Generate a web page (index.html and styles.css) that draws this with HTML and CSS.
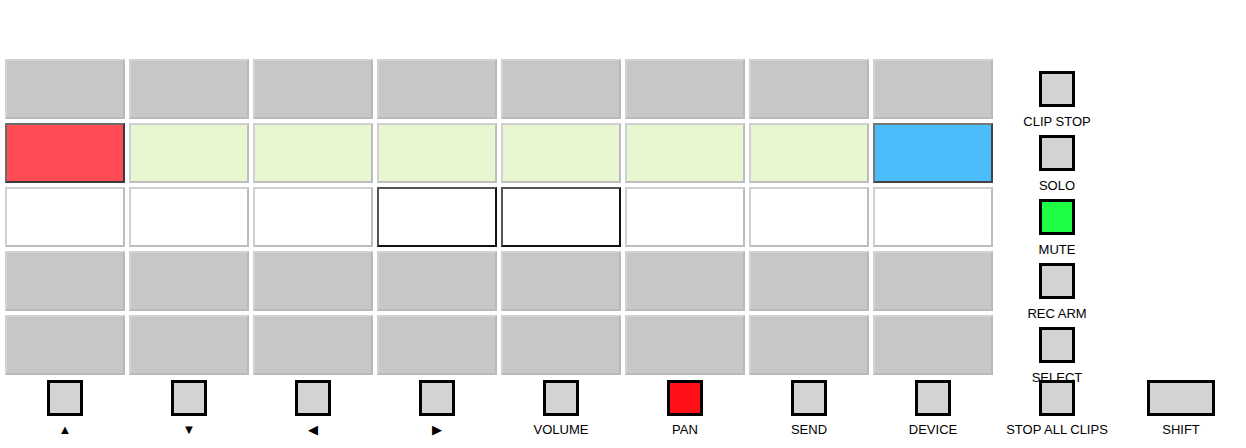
FILE: index.html
```html
<!DOCTYPE html>
<html>
<head>
<meta charset="utf-8">
<link rel="stylesheet" href="styles.css">
</head>
<body>
<div class="board">
  <div class="row">
    <div class="pad off"></div><div class="pad off"></div><div class="pad off"></div><div class="pad off"></div>
    <div class="pad off"></div><div class="pad off"></div><div class="pad off"></div><div class="pad off"></div>
    <div class="side"><div class="btn"></div><div class="label side-label">CLIP STOP</div></div>
  </div>
  <div class="row">
    <div class="pad red"></div><div class="pad lime"></div><div class="pad lime"></div><div class="pad lime"></div>
    <div class="pad lime"></div><div class="pad lime"></div><div class="pad lime"></div><div class="pad blue"></div>
    <div class="side"><div class="btn"></div><div class="label side-label">SOLO</div></div>
  </div>
  <div class="row">
    <div class="pad white"></div><div class="pad white"></div><div class="pad white"></div><div class="pad white sel"></div>
    <div class="pad white sel"></div><div class="pad white"></div><div class="pad white"></div><div class="pad white"></div>
    <div class="side"><div class="btn green"></div><div class="label side-label">MUTE</div></div>
  </div>
  <div class="row">
    <div class="pad off"></div><div class="pad off"></div><div class="pad off"></div><div class="pad off"></div>
    <div class="pad off"></div><div class="pad off"></div><div class="pad off"></div><div class="pad off"></div>
    <div class="side"><div class="btn"></div><div class="label side-label">REC ARM</div></div>
  </div>
  <div class="row">
    <div class="pad off"></div><div class="pad off"></div><div class="pad off"></div><div class="pad off"></div>
    <div class="pad off"></div><div class="pad off"></div><div class="pad off"></div><div class="pad off"></div>
    <div class="side"><div class="btn"></div><div class="label side-label">SELECT</div></div>
  </div>
  <div class="row bottom">
    <div class="cell"><div class="btn"></div><div class="label">▲</div></div>
    <div class="cell"><div class="btn"></div><div class="label">▼</div></div>
    <div class="cell"><div class="btn"></div><div class="label">◀</div></div>
    <div class="cell"><div class="btn"></div><div class="label">▶</div></div>
    <div class="cell"><div class="btn"></div><div class="label">VOLUME</div></div>
    <div class="cell"><div class="btn red-btn"></div><div class="label">PAN</div></div>
    <div class="cell"><div class="btn"></div><div class="label">SEND</div></div>
    <div class="cell"><div class="btn"></div><div class="label">DEVICE</div></div>
    <div class="cell"><div class="btn"></div><div class="label">STOP ALL CLIPS</div></div>
    <div class="cell"><div class="btn wide"></div><div class="label">SHIFT</div></div>
  </div>
</div>
</body>
</html>
```
FILE: styles.css
```css
html, body {
  margin: 0;
  padding: 0;
  background: #ffffff;
}
body {
  font-family: "Liberation Sans", Arial, "DejaVu Sans", sans-serif;
  font-size: 13px;
  color: #000;
}
.board {
  padding: 57px 0 0 3px;
}
.row {
  display: flex;
  height: 64px;
}
.pad {
  box-sizing: border-box;
  width: 120px;
  height: 60px;
  margin: 2px;
  border: 2px solid;
  flex: none;
}
.pad.off {
  background: #c7c7c7;
  border-color: #d2d2d2 #b9b9b9 #b9b9b9 #d2d2d2;
}
.pad.lime {
  background: #e9f7d1;
  border-color: #d0d0d0 #bdbdbd #bdbdbd #d0d0d0;
}
.pad.white {
  background: #ffffff;
  border-color: #d0d0d0 #bdbdbd #bdbdbd #d0d0d0;
}
.pad.white.sel {
  border-color: #555555 #111111 #111111 #555555;
}
.pad.red {
  background: #ff4b53;
  border-color: #6b6b6b #3a3a3a #3a3a3a #6b6b6b;
}
.pad.blue {
  background: #4bbdfb;
  border-color: #777777 #444444 #444444 #777777;
}
.side, .cell {
  width: 124px;
  flex: none;
  display: flex;
  flex-direction: column;
  align-items: center;
}
.side {
  padding-top: 14px;
}
.bottom .cell {
  padding-top: 3px;
}
.btn {
  box-sizing: border-box;
  width: 36px;
  height: 36px;
  border: 3px solid #000;
  background: #d3d3d3;
  flex: none;
}
.btn.wide {
  width: 68px;
}
.btn.green {
  background: #1eff44;
}
.btn.red-btn {
  background: #ff0f17;
}
.label {
  line-height: 15px;
  margin-top: 6px;
  white-space: nowrap;
}
.side-label {
  margin-top: 7px;
}
```
